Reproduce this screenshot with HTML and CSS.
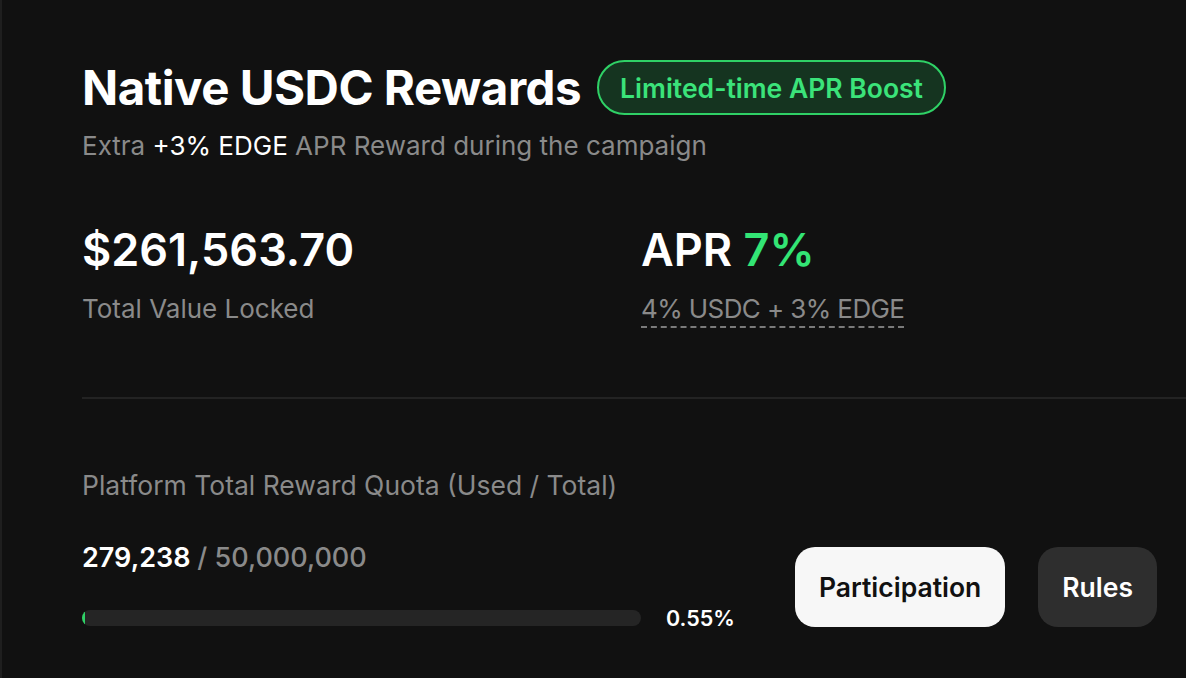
FILE: index.html
```html
<!DOCTYPE html>
<html lang="en">
<head>
    <meta charset="UTF-8">
    <meta name="viewport" content="width=device-width, initial-scale=1.0">
    <title>Native USDC Rewards</title>
    <link rel="stylesheet" href="styles.css">
</head>
<body>
    <div class="panel">
        <!-- Title with the boost badge -->
        <div class="title-row">
            <h1 class="title">Native USDC Rewards</h1>
            <span class="badge">Limited-time APR Boost</span>
        </div>
        <p class="subtitle">Extra <span class="hl">+3% EDGE</span> APR Reward during the campaign</p>

        <!-- Headline stats -->
        <div class="stats">
            <div class="stat">
                <div class="stat-value">$261,563.70</div>
                <div class="stat-label">Total Value Locked</div>
            </div>
            <div class="stat">
                <div class="stat-value">APR <span class="green">7%</span></div>
                <div class="stat-label"><span class="dashed">4% USDC + 3% EDGE</span></div>
            </div>
        </div>

        <div class="divider"></div>

        <!-- Reward quota -->
        <div class="quota-label">Platform Total Reward Quota (Used / Total)</div>
        <div class="quota-body">
            <div class="quota-left">
                <div class="quota-figures">279,238 <span class="total">/ 50,000,000</span></div>
                <div class="progress-row">
                    <div class="progress"><div class="progress-fill" style="width: 0.55%"></div></div>
                    <span class="percent">0.55%</span>
                </div>
            </div>
            <div class="actions">
                <button class="btn btn-light">Participation</button>
                <button class="btn btn-dark">Rules</button>
            </div>
        </div>
    </div>
</body>
</html>
```

FILE: styles.css
```css
/* Base page */
html, body {
    margin: 0;
    padding: 0;
    background-color: #111111;
    color: #ffffff;
    font-family: Inter, "Noto Sans", sans-serif;
}

.panel {
    min-height: 100vh;
    box-sizing: border-box;
    border-left: 2px solid #1f1f1f;
    padding: 60px 0 0 80px;
}

/* Title row */
.title-row {
    display: flex;
    align-items: center;
    gap: 16px;
}

.title {
    margin: 0;
    font-size: 47.5px;
    line-height: 1;
    font-weight: 700;
    letter-spacing: -0.5px;
}

.badge {
    display: inline-flex;
    align-items: center;
    height: 55px;
    box-sizing: border-box;
    padding: 0 21px;
    border: 2px solid #2fd166;
    border-radius: 28px;
    background-color: #153420;
    color: #3be37a;
    font-size: 26.5px;
    font-weight: 600;
}

.subtitle {
    margin: 13px 0 0;
    font-size: 26px;
    line-height: 36px;
    color: #8a8a8a;
}

.hl {
    color: #ffffff;
}

/* Stats */
.stats {
    display: grid;
    grid-template-columns: 559px 1fr;
    margin-top: 58px;
}

.stat-value {
    font-size: 45px;
    line-height: 56px;
    font-weight: 600;
}

.green {
    color: #33e575;
}

.stat-label {
    margin-top: 13px;
    font-size: 26px;
    line-height: 36px;
    color: #8a8a8a;
}

.dashed {
    padding-bottom: 2px;
    border-bottom: 2px dashed #7a7a7a;
    letter-spacing: -0.6px;
}

.divider {
    margin-top: 70px;
    border-top: 2px solid #232323;
}

/* Quota */
.quota-label {
    margin-top: 68px;
    font-size: 26.5px;
    line-height: 36px;
    color: #8a8a8a;
}

.quota-body {
    display: flex;
    align-items: flex-end;
    margin-top: 37px;
}

.quota-figures {
    font-size: 27px;
    line-height: 36px;
    font-weight: 600;
}

.total {
    color: #8a8a8a;
    font-weight: 500;
}

.progress-row {
    display: flex;
    align-items: center;
    gap: 25px;
    margin-top: 29px;
}

.progress {
    width: 559px;
    height: 16px;
    border-radius: 8px;
    background-color: #252525;
    overflow: hidden;
}

.progress-fill {
    min-width: 3px;
    height: 100%;
    border-radius: 8px;
    background-color: #2fd166;
}

.percent {
    font-size: 21.5px;
    font-weight: 600;
}

.actions {
    display: flex;
    gap: 33px;
    margin-left: 60px;
    margin-bottom: 4px;
}

.btn {
    height: 80px;
    padding: 0 24px;
    border: none;
    border-radius: 20px;
    font-family: inherit;
    font-size: 26.5px;
    font-weight: 600;
    cursor: pointer;
}

.btn-light {
    background-color: #f7f7f7;
    color: #111111;
}

.btn-dark {
    background-color: #2e2e2e;
    color: #ffffff;
}
```
